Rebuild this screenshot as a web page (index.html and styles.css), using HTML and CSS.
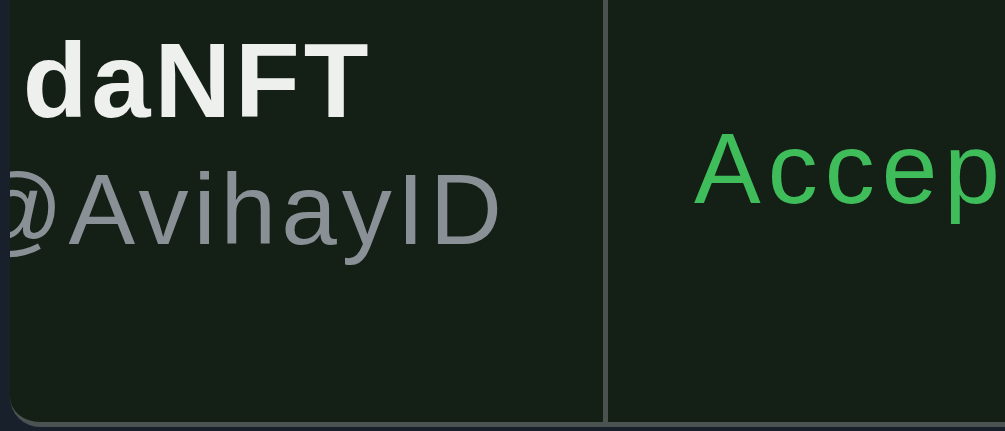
FILE: index.html
```html
<!DOCTYPE html>
<html lang="en">
<head>
<meta charset="utf-8">
<title>Profile crop</title>
<link rel="stylesheet" href="styles.css">
</head>
<body>
  <div class="frame">
    <section class="left">
      <div class="name"><span class="cut">n</span>daNFT</div>
      <div class="handle">@AvihayID</div>
    </section>
    <div class="divider"></div>
    <section class="right">
      <div class="status">Accept</div>
    </section>
  </div>
</body>
</html>
```
FILE: styles.css
```css
html, body {
  margin: 0;
  padding: 0;
}
body {
  width: 1005px;
  height: 431px;
  overflow: hidden;
  background: #18212b;
  font-family: "Liberation Sans", Arial, sans-serif;
}
.frame {
  display: flex;
  margin-left: 10px;
  height: 422px;
  background: #141f16;
  border-bottom: 5px solid #4a5352;
  border-bottom-left-radius: 30px;
  overflow: hidden;
}
.left {
  width: 593px;
  overflow: hidden;
  padding-top: 27px;
  box-sizing: border-box;
}
.name {
  margin-left: -66px;
  font-size: 106px;
  line-height: 1;
  font-weight: 700;
  letter-spacing: 4px;
  color: #eef0ed;
  white-space: nowrap;
}
.cut {
  margin-right: 10px;
}
.handle {
  margin-top: 26px;
  margin-left: -48px;
  font-size: 100px;
  line-height: 1;
  letter-spacing: 5px;
  color: #8a9196;
  white-space: nowrap;
}
.divider {
  width: 5px;
  background: #4b524f;
  flex: none;
}
.right {
  flex: 1;
  overflow: hidden;
  padding-top: 118px;
  padding-left: 86px;
}
.status {
  font-size: 100px;
  line-height: 1;
  letter-spacing: 7px;
  color: #3fbd5b;
  white-space: nowrap;
}
```
